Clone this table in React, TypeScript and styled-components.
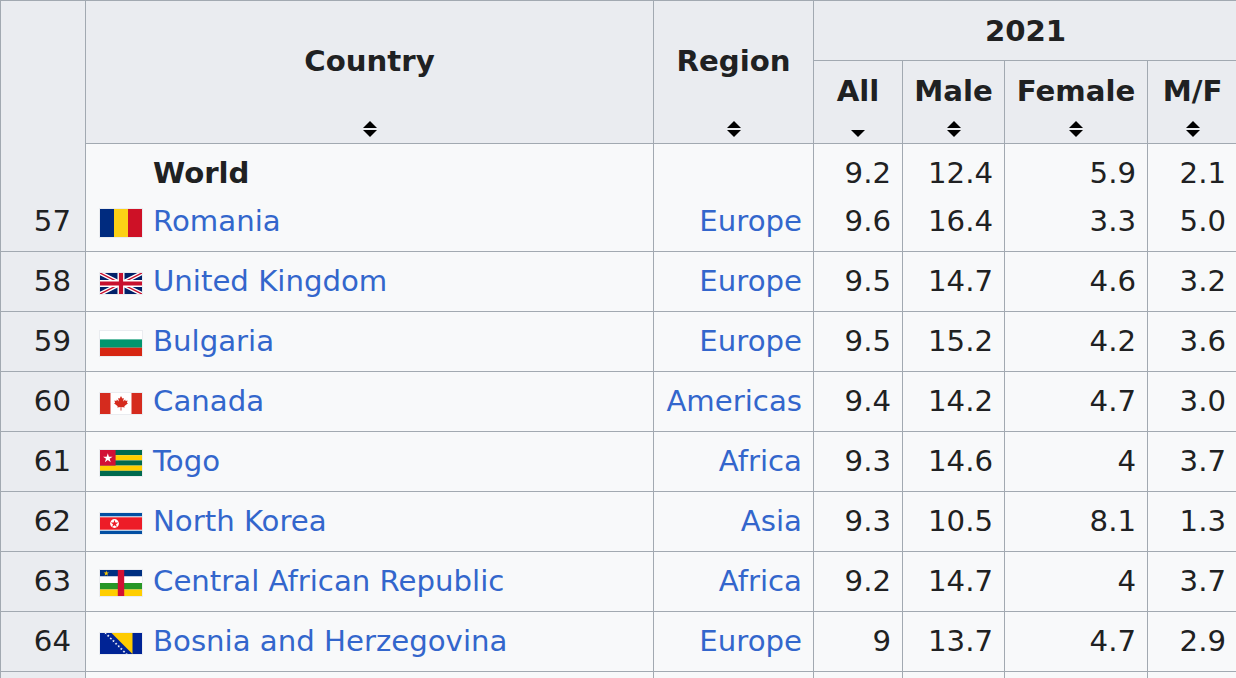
import React from "react";
import styled, { createGlobalStyle, css } from "styled-components";

const GlobalStyle = createGlobalStyle`
  html, body {
    margin: 0;
    padding: 0;
    background: #ffffff;
    overflow: hidden;
  }
  body {
    font-family: "DejaVu Sans", "Liberation Sans", sans-serif;
    color: #202122;
  }
`;

const Table = styled.table`
  border-collapse: collapse;
  table-layout: fixed;
  width: 1237px;
  font-size: 29.2px;
  color: #202122;
`;

const HeadCell = styled.th<{ $sortable?: boolean }>`
  position: relative;
  background: #eaecf0;
  border: 1px solid #a2a9b1;
  font-weight: bold;
  text-align: center;
  vertical-align: middle;
  padding: 2px 10px 0;
  line-height: 57px;
  white-space: nowrap;
  ${(p) =>
    p.$sortable &&
    css`
      padding-top: 0;
      padding-bottom: 22px;
      line-height: 60px;
    `}
`;

const RankHead = styled.th`
  background: #eaecf0;
  border: 1px solid #a2a9b1;
  font-weight: normal;
  text-align: right;
  vertical-align: bottom;
  padding: 0 14px 6px 11px;
  line-height: 48px;
`;

const Row = styled.tr<{ $variant?: "world" | "first" }>`
  & > td {
    background: #f8f9fa;
    border: 1px solid #a2a9b1;
    line-height: 59px;
    padding: 0 11px;
    white-space: nowrap;
    overflow: hidden;
  }
  ${(p) =>
    p.$variant === "world" &&
    css`
      & > td {
        border-bottom: none;
        line-height: 48px;
        padding-top: 5px;
      }
    `}
  ${(p) =>
    p.$variant === "first" &&
    css`
      & > td {
        border-top: none;
        line-height: 48px;
        padding-bottom: 6px;
      }
    `}
`;

const RankCell = styled.td`
  text-align: right;
  ${Row} > && {
    background: #eaecf0;
    padding-right: 14px;
  }
`;

const CountryCell = styled.td`
  text-align: left;
  ${Row} > && {
    padding-left: 13px;
  }
`;

const NumCell = styled.td`
  text-align: right;
`;

const Link = styled.a`
  color: #3366cc;
  text-decoration: none;
`;

const WorldName = styled.b`
  font-weight: bold;
`;

const FlagSlot = styled.span`
  display: inline-block;
  width: 44px;
  margin-right: 10px;
  line-height: 0;
  vertical-align: middle;
`;

const FlagFrame = styled.svg`
  display: block;
  border: 1px solid #eaecf0;
  box-sizing: content-box;
`;

const SortMark = styled.svg`
  position: absolute;
  left: 50%;
  bottom: 6px;
  transform: translateX(-50%);
  display: block;
`;

function SortIcon({ down }: { down?: boolean }) {
  if (down) {
    return (
      <SortMark width="14" height="7" viewBox="0 0 14 7">
        <polygon points="0,0 14,0 7,7" fill="#000" />
      </SortMark>
    );
  }
  return (
    <SortMark width="14" height="16" viewBox="0 0 14 16">
      <polygon points="0,7 7,0 14,7" fill="#000" />
      <polygon points="0,9 14,9 7,16" fill="#000" />
    </SortMark>
  );
}

function starPoints(cx: number, cy: number, r: number) {
  const pts: string[] = [];
  for (let i = 0; i < 10; i++) {
    const rad = i % 2 === 0 ? r : r * 0.382;
    const a = -Math.PI / 2 + (i * Math.PI) / 5;
    pts.push(`${(cx + rad * Math.cos(a)).toFixed(2)},${(cy + rad * Math.sin(a)).toFixed(2)}`);
  }
  return pts.join(" ");
}

type FlagCode = "ro" | "gb" | "bg" | "ca" | "tg" | "kp" | "cf" | "ba";

const flagHeights: Record<FlagCode, number> = {
  ro: 28,
  gb: 21,
  bg: 25,
  ca: 21,
  tg: 26,
  kp: 21,
  cf: 26,
  ba: 21,
};

function FlagArt({ code }: { code: FlagCode }) {
  const h = flagHeights[code];
  switch (code) {
    case "ro":
      return (
        <>
          <rect x="0" y="0" width="14" height={h} fill="#002B7F" />
          <rect x="14" y="0" width="14" height={h} fill="#FCD116" />
          <rect x="28" y="0" width="14" height={h} fill="#CE1126" />
        </>
      );
    case "gb":
      return (
        <>
          <rect width="42" height="21" fill="#012169" />
          <path d="M0,0 L42,21 M42,0 L0,21" stroke="#fff" strokeWidth="4.2" />
          <path d="M0,0 L42,21 M42,0 L0,21" stroke="#C8102E" strokeWidth="1.4" />
          <path d="M21,0 V21 M0,10.5 H42" stroke="#fff" strokeWidth="7" />
          <path d="M21,0 V21 M0,10.5 H42" stroke="#C8102E" strokeWidth="4.2" />
        </>
      );
    case "bg":
      return (
        <>
          <rect y="0" width="42" height="8.4" fill="#ffffff" />
          <rect y="8.4" width="42" height="8.3" fill="#00966E" />
          <rect y="16.7" width="42" height="8.3" fill="#D62612" />
        </>
      );
    case "ca":
      return (
        <>
          <rect width="42" height="21" fill="#ffffff" />
          <rect x="0" width="10.5" height="21" fill="#D52B1E" />
          <rect x="31.5" width="10.5" height="21" fill="#D52B1E" />
          <path
            d="M21,3 L22.3,5.6 L23.8,4.9 L23.2,8.6 L25.2,6.6 L25.6,7.9 L27.6,7.5 L26.9,9.7 L28,10.3 L24.3,13.3 L24.7,14.6 L21.4,14.1 L21.4,17.6 L20.6,17.6 L20.6,14.1 L17.3,14.6 L17.7,13.3 L14,10.3 L15.1,9.7 L14.4,7.5 L16.4,7.9 L16.8,6.6 L18.8,8.6 L18.2,4.9 L19.7,5.6 Z"
            fill="#D52B1E"
          />
        </>
      );
    case "tg": {
      const s = 26 / 5;
      return (
        <>
          {[0, 1, 2, 3, 4].map((i) => (
            <rect
              key={i}
              y={i * s}
              width="42"
              height={s}
              fill={i % 2 === 0 ? "#006A4E" : "#FFCE00"}
            />
          ))}
          <rect width={s * 3} height={s * 3} fill="#D21034" />
          <polygon points={starPoints(s * 1.5, s * 1.5 + 0.4, 5)} fill="#ffffff" />
        </>
      );
    }
    case "kp":
      return (
        <>
          <rect width="42" height="21" fill="#024FA2" />
          <rect y="3.3" width="42" height="14.4" fill="#ffffff" />
          <rect y="4.3" width="42" height="12.4" fill="#ED1C27" />
          <circle cx="14.5" cy="10.5" r="4.4" fill="#ffffff" />
          <polygon points={starPoints(14.5, 10.8, 4.1)} fill="#ED1C27" />
        </>
      );
    case "cf": {
      const s = 26 / 4;
      const colors = ["#003082", "#ffffff", "#289728", "#FFCE00"];
      return (
        <>
          {colors.map((c, i) => (
            <rect key={c} y={i * s} width="42" height={s} fill={c} />
          ))}
          <rect x="17.8" width="6.4" height="26" fill="#D21034" />
          <polygon points={starPoints(6.3, 3.4, 2.8)} fill="#FFCE00" />
        </>
      );
    }
    case "ba": {
      const stars = [0, 1, 2, 3, 4, 5, 6, 7, 8].map((i) => {
        const t = i / 8;
        return starPoints(5.6 + t * 21, 0.2 + t * 21, 1.5);
      });
      return (
        <>
          <rect width="42" height="21" fill="#002395" />
          <polygon points="11.5,0 32.5,0 32.5,21" fill="#FECB00" />
          {stars.map((p, i) => (
            <polygon key={i} points={p} fill="#ffffff" />
          ))}
        </>
      );
    }
  }
}

function Flag({ code }: { code: FlagCode }) {
  const h = flagHeights[code];
  return (
    <FlagSlot>
      <FlagFrame width="42" height={h} viewBox={`0 0 42 ${h}`}>
        <FlagArt code={code} />
      </FlagFrame>
    </FlagSlot>
  );
}

type Entry = {
  rank: number;
  country: string;
  flag: FlagCode;
  region: string;
  all: string;
  male: string;
  female: string;
  ratio: string;
};

const rows: Entry[] = [
  { rank: 58, country: "United Kingdom", flag: "gb", region: "Europe", all: "9.5", male: "14.7", female: "4.6", ratio: "3.2" },
  { rank: 59, country: "Bulgaria", flag: "bg", region: "Europe", all: "9.5", male: "15.2", female: "4.2", ratio: "3.6" },
  { rank: 60, country: "Canada", flag: "ca", region: "Americas", all: "9.4", male: "14.2", female: "4.7", ratio: "3.0" },
  { rank: 61, country: "Togo", flag: "tg", region: "Africa", all: "9.3", male: "14.6", female: "4", ratio: "3.7" },
  { rank: 62, country: "North Korea", flag: "kp", region: "Asia", all: "9.3", male: "10.5", female: "8.1", ratio: "1.3" },
  { rank: 63, country: "Central African Republic", flag: "cf", region: "Africa", all: "9.2", male: "14.7", female: "4", ratio: "3.7" },
  { rank: 64, country: "Bosnia and Herzegovina", flag: "ba", region: "Europe", all: "9", male: "13.7", female: "4.7", ratio: "2.9" },
];

export default function App() {
  return (
    <>
      <GlobalStyle />
      <Table>
        <colgroup>
          <col style={{ width: 85 }} />
          <col style={{ width: 568 }} />
          <col style={{ width: 160 }} />
          <col style={{ width: 89 }} />
          <col style={{ width: 102 }} />
          <col style={{ width: 143 }} />
          <col style={{ width: 90 }} />
        </colgroup>
        <tbody>
          <tr>
            <RankHead rowSpan={4}>57</RankHead>
            <HeadCell rowSpan={2} $sortable>
              Country
              <SortIcon />
            </HeadCell>
            <HeadCell rowSpan={2} $sortable>
              Region
              <SortIcon />
            </HeadCell>
            <HeadCell colSpan={4}>2021</HeadCell>
          </tr>
          <tr>
            <HeadCell $sortable>
              All
              <SortIcon down />
            </HeadCell>
            <HeadCell $sortable>
              Male
              <SortIcon />
            </HeadCell>
            <HeadCell $sortable>
              Female
              <SortIcon />
            </HeadCell>
            <HeadCell $sortable>
              M/F
              <SortIcon />
            </HeadCell>
          </tr>
          <Row $variant="world">
            <CountryCell>
              <FlagSlot />
              <WorldName>World</WorldName>
            </CountryCell>
            <NumCell />
            <NumCell>9.2</NumCell>
            <NumCell>12.4</NumCell>
            <NumCell>5.9</NumCell>
            <NumCell>2.1</NumCell>
          </Row>
          <Row $variant="first">
            <CountryCell>
              <Flag code="ro" />
              <Link href="#">Romania</Link>
            </CountryCell>
            <NumCell>
              <Link href="#">Europe</Link>
            </NumCell>
            <NumCell>9.6</NumCell>
            <NumCell>16.4</NumCell>
            <NumCell>3.3</NumCell>
            <NumCell>5.0</NumCell>
          </Row>
          {rows.map((r) => (
            <Row key={r.rank}>
              <RankCell>{r.rank}</RankCell>
              <CountryCell>
                <Flag code={r.flag} />
                <Link href="#">{r.country}</Link>
              </CountryCell>
              <NumCell>
                <Link href="#">{r.region}</Link>
              </NumCell>
              <NumCell>{r.all}</NumCell>
              <NumCell>{r.male}</NumCell>
              <NumCell>{r.female}</NumCell>
              <NumCell>{r.ratio}</NumCell>
            </Row>
          ))}
          <Row>
            <RankCell>&nbsp;</RankCell>
            <CountryCell />
            <NumCell />
            <NumCell />
            <NumCell />
            <NumCell />
            <NumCell />
          </Row>
        </tbody>
      </Table>
    </>
  );
}
